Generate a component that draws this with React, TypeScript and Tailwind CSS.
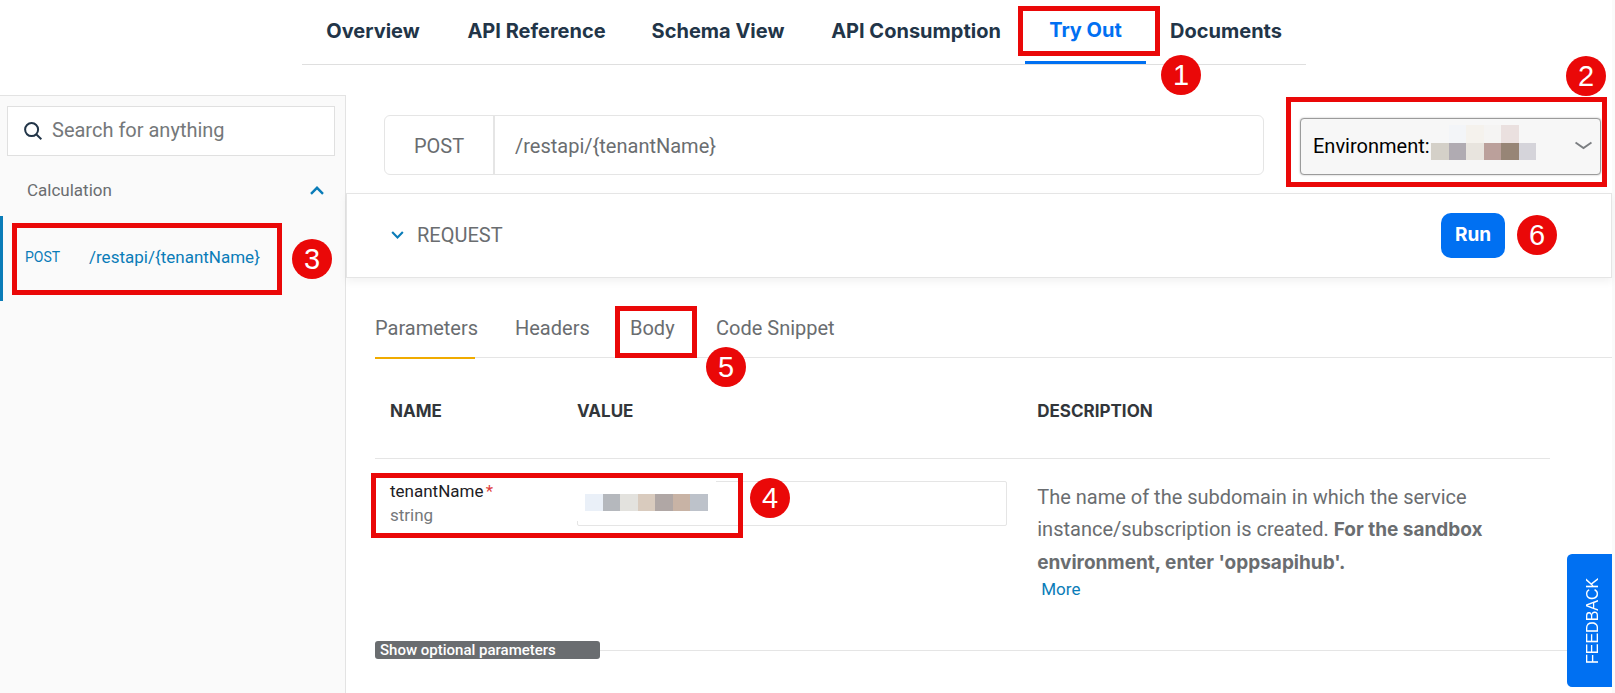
import React from "react";

const callout = "pointer-events-none absolute z-20 border-5 border-[#ea0808]";

function Marker({ n, className }: { n: number; className: string }) {
  return (
    <span
      className={`pointer-events-none absolute z-20 flex size-10 items-center justify-center rounded-full bg-[#ea0808] font-['Liberation_Sans',sans-serif] text-[29px] leading-10 font-normal text-white ${className}`}
    >
      {n}
    </span>
  );
}

function Chevron({ className, up = false }: { className: string; up?: boolean }) {
  return (
    <svg viewBox="0 0 14 9" className={className} fill="none" stroke="currentColor" strokeWidth="2.4" aria-hidden="true">
      <path d={up ? "M1 7.8 7 1.8l6 6" : "M1 1.2l6 6 6-6"} />
    </svg>
  );
}

const navItems = ["Overview", "API Reference", "Schema View", "API Consumption", "Try Out", "Documents"];

function TopNav() {
  return (
    <nav className="mb-[30px] flex justify-center pr-1">
      <div className="grid grid-cols-[142px_185px_178px_218px_121px_160px] border-b border-[#dfdfdf] font-['Inter',sans-serif] text-xl font-bold text-[#223548]">
        {navItems.map((label) =>
          label === "Try Out" ? (
            <div key={label} className="relative">
              <a href="#try-out" className="flex h-16 justify-center border-b-3 border-[#0070f2] pt-4 leading-7 text-[#0070f2]">
                {label}
              </a>
              <span className={`${callout} top-1.5 -right-3.5 -left-[7px] h-[50px]`} />
              <Marker n={1} className="top-[55px] left-[136px]" />
            </div>
          ) : (
            <a key={label} href={`#${label}`} className="flex h-16 justify-center pt-[17px] leading-7 whitespace-nowrap">
              {label}
            </a>
          ),
        )}
      </div>
    </nav>
  );
}

function Sidebar() {
  return (
    <aside className="border-t border-r border-[#e3e3e3] bg-[#fafafa]">
      <label className="mt-2.5 mr-2.5 ml-[7px] flex h-[50px] items-center border border-[#e0e0e0] bg-white pl-4">
        <svg viewBox="0 0 18 18" className="size-[18px] shrink-0 text-[#223548]" fill="none" stroke="currentColor" strokeWidth="2" aria-hidden="true">
          <circle cx="7.6" cy="7.6" r="6.5" />
          <path d="M12.2 12.2l5.2 5" />
        </svg>
        <input
          type="text"
          aria-label="Search"
          placeholder="Search for anything"
          className="ml-2.5 w-full min-w-0 bg-transparent pb-0.5 text-xl text-[#6a6d70] outline-none placeholder:text-[#75787a]"
        />
      </label>
      <button type="button" className="mt-[22px] flex w-full items-center justify-between pr-[21px] pl-[27px] text-[17px] leading-6 text-[#6a6d70]">
        Calculation
        <Chevron up className="h-[9px] w-3.5 text-[#0a7cb8]" />
      </button>
      <div className="relative mt-3.5">
        <a href="#post" className="flex h-[85px] items-center border-l-3 border-[#0a7cb8] pb-1 pl-[22px] leading-6 text-[#0a7cb8]">
          <span className="w-16 text-sm leading-6">POST</span>
          <span className="text-[17px]">/restapi/{"{tenantName}"}</span>
        </a>
        <span className={`${callout} top-[7px] left-3 h-[72px] w-[270px]`} />
        <Marker n={3} className="top-[23px] left-[292px]" />
      </div>
    </aside>
  );
}

function Environment() {
  return (
    <div className="relative ml-9 h-[57px] w-[301px] shrink-0">
      <select
        aria-label="Environment"
        className="size-full appearance-none rounded border border-[#9b9b9b] bg-[#f7f7f7] pb-0.5 pl-3 text-xl text-black shadow-[0_0_2px_rgba(0,0,0,0.3)]"
      >
        <option>Environment:</option>
      </select>
      <div className="pointer-events-none absolute top-[7px] left-[131px] grid w-[105px] grid-cols-6">
        <i className="h-[18px]" />
        <i className="bg-[#f3f5f8]" />
        <i className="bg-[#f5f2ed]" />
        <i className="bg-[#f5f4f3]" />
        <i className="bg-[#eae0df]" />
        <i />
        <i className="h-[17px] bg-[#d4d0c8]" />
        <i className="bg-[#b0abb2]" />
        <i className="bg-[#e8e4de]" />
        <i className="bg-[#bba09b]" />
        <i className="bg-[#978576]" />
        <i className="bg-[#d5d4da]" />
      </div>
      <svg viewBox="0 0 17 9" className="pointer-events-none absolute top-[23px] right-[9px] h-[9px] w-[17px] text-[#7b7e81]" fill="none" stroke="currentColor" strokeWidth="2" aria-hidden="true">
        <path d="M.5 1.5l8 5.5 8-5.5" />
      </svg>
      <span className={`${callout} -top-[21px] -right-1.5 -left-3.5 h-[90px]`} />
      <Marker n={2} className="-top-[62px] -right-[5px]" />
    </div>
  );
}

function Tabs() {
  const tab = "relative pb-[15px] text-left leading-7 whitespace-nowrap";
  return (
    <div className="mt-9 ml-[29px] flex gap-10 border-b border-[#e5e5e5] text-xl text-[#6a6d70]">
      <button type="button" className={`${tab} -mb-0.5 w-[100px] border-b-2 border-[#f0ab00]`}>
        Parameters
      </button>
      <button type="button" className={`${tab} w-[75px]`}>
        Headers
      </button>
      <button type="button" className={`${tab} w-[46px]`}>
        Body
        <span className={`${callout} -top-2 -right-[21px] -left-[15px] h-[52px]`} />
        <Marker n={5} className="top-[33px] left-[76px]" />
      </button>
      <button type="button" className={`${tab} w-[122px]`}>
        Code Snippet
      </button>
    </div>
  );
}

function Parameters() {
  const th = "pt-[41px] pb-[35px] leading-6 font-bold";
  return (
    <table className="mr-[62px] ml-[29px] w-[calc(100%-91px)] table-fixed border-collapse text-left text-[17px]">
      <thead>
        <tr className="border-b border-[#e5e5e5] font-['Inter',sans-serif] text-[#32363a]">
          <th className={`${th} w-[16%] pl-[15px]`}>NAME</th>
          <th className={`${th} w-[39%] pl-3.5`}>VALUE</th>
          <th className={`${th} pl-4`}>DESCRIPTION</th>
        </tr>
      </thead>
      <tbody className="align-top">
        <tr>
          <td className="relative pt-5 pl-[15px] leading-6">
            <label htmlFor="tenant" className="text-[#1d2024]">
              tenantName <span className="-ml-0.5 text-[#e0403c]">*</span>
            </label>
            <p className="text-[#75787a]">string</p>
            <span className={`${callout} top-3.5 -left-1 h-[65px] w-[372px]`} />
            <Marker n={4} className="top-[19px] left-[375px]" />
          </td>
          <td className="relative px-3.5 pt-[22px]">
            <input id="tenant" type="text" className="block h-[45px] w-full rounded-xs border border-[#e5e5e5] px-3 outline-none" />
            <div className="pointer-events-none absolute top-[22px] left-3.5 h-10 w-[139px] bg-white pt-[13px] pl-2">
              <div className="grid h-[17px] w-[123px] grid-cols-7">
                <i className="bg-[#eaf0f8]" />
                <i className="bg-[#b5b8bd]" />
                <i className="bg-[#e3e2de]" />
                <i className="bg-[#d9cbbe]" />
                <i className="bg-[#b0a7a5]" />
                <i className="bg-[#c8b3a5]" />
                <i className="bg-[#bdc2ca]" />
              </div>
            </div>
          </td>
          <td className="pt-[22px] pl-4 text-[#6a6d70]">
            <p className="max-w-[460px] text-xl leading-8">
              The name of the subdomain in which the service instance/subscription is created.{" "}
              <b className="font-['Inter',sans-serif] text-[19px]">For the sandbox environment, enter 'oppsapihub'.</b>
            </p>
            <a href="#more" className="ml-1 block pb-0.5 leading-5 text-[#0a7cb8]">
              More
            </a>
          </td>
        </tr>
      </tbody>
    </table>
  );
}

export default function App() {
  return (
    <div className="flex min-h-screen flex-col border-r-3 border-[#fafafa] bg-white font-['Roboto',sans-serif]">
      <TopNav />
      <div className="grid flex-1 grid-cols-[346px_minmax(0,1fr)]">
        <Sidebar />
        <main>
          <div className="mt-5 mr-[11px] ml-[38px] flex items-end text-xl text-[#6a6d70]">
            <div className="flex h-[60px] flex-1 items-center rounded-md border border-[#e5e5e5]">
              <span className="flex h-full w-[110px] items-center justify-center border-r-2 border-[#e5e5e5] pt-0.5">POST</span>
              <span className="pt-0.5 pl-5">/restapi/{"{tenantName}"}</span>
            </div>
            <Environment />
          </div>
          <section className="mt-[18px] flex h-[85px] items-center justify-between border border-[#e5e5e5] pr-[106px] pl-11 text-xl text-[#6a6d70] shadow-[0_4px_8px_rgba(0,0,0,0.05)]">
            <button type="button" className="flex items-center gap-[13px] pb-0.5">
              <Chevron className="h-2 w-[13px] text-[#0a7cb8]" />
              REQUEST
            </button>
            <div className="relative">
              <button type="button" className="block h-[45px] w-16 rounded-[10px] bg-[#0070f2] font-['Inter',sans-serif] text-[19px] font-bold text-white">
                Run
              </button>
              <Marker n={6} className="top-0.5 left-19" />
            </div>
          </section>
          <Tabs />
          <Parameters />
          <div className="mt-10 ml-[29px] flex items-center">
            <button type="button" className="h-[18px] w-[225px] rounded-[3px] bg-[#6a6d70] pl-[5px] text-left text-[15px] leading-[18px] font-medium text-white">
              Show optional parameters
            </button>
            <span className="h-px flex-1 bg-[#e5e5e5]" />
          </div>
        </main>
      </div>
      <button
        type="button"
        className="fixed right-[3px] bottom-1.5 z-10 flex h-[133px] w-[45px] rotate-180 items-center justify-center rounded-r-[5px] bg-[#0070f2] pr-2 font-['Liberation_Sans',sans-serif] text-base text-white [writing-mode:vertical-rl]"
      >
        FEEDBACK
      </button>
    </div>
  );
}
